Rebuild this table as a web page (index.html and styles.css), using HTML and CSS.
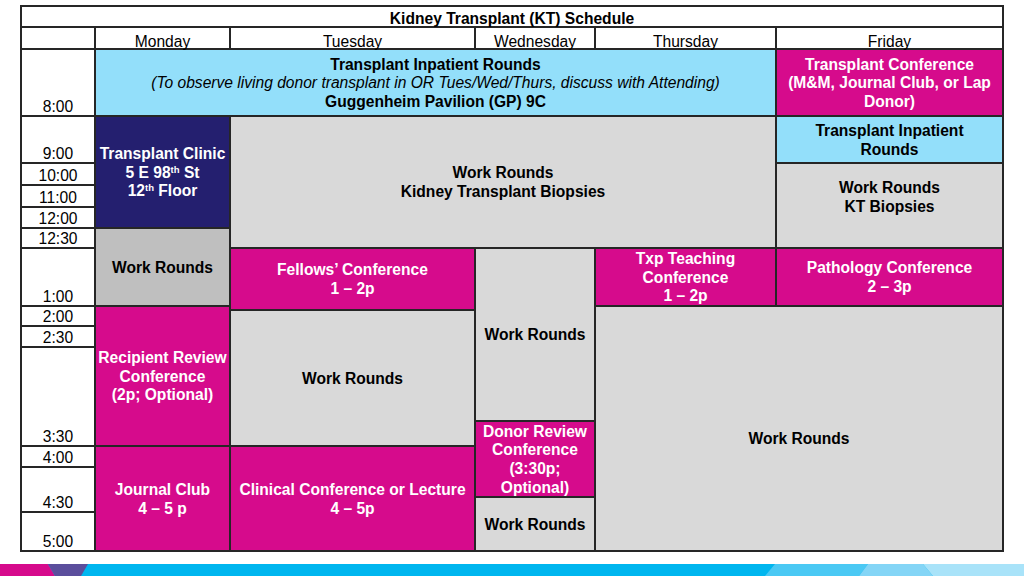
FILE: index.html
```html
<!DOCTYPE html>
<html lang="en">
<head>
<meta charset="utf-8">
<title>Kidney Transplant (KT) Schedule</title>
<link rel="stylesheet" href="styles.css">
</head>
<body>
<main class="page">
  <div class="schedule">
    <div class="cell title">Kidney Transplant (KT) Schedule</div>

    <div class="cell head h-time"></div>
    <div class="cell head h-mon">Monday</div>
    <div class="cell head h-tue">Tuesday</div>
    <div class="cell head h-wed">Wednesday</div>
    <div class="cell head h-thu">Thursday</div>
    <div class="cell head h-fri">Friday</div>

    <div class="cell time t-800">8:00</div>
    <div class="cell time t-900">9:00</div>
    <div class="cell time t-1000">10:00</div>
    <div class="cell time t-1100">11:00</div>
    <div class="cell time t-1200">12:00</div>
    <div class="cell time t-1230">12:30</div>
    <div class="cell time t-100">1:00</div>
    <div class="cell time t-200">2:00</div>
    <div class="cell time t-230">2:30</div>
    <div class="cell time t-330">3:30</div>
    <div class="cell time t-400">4:00</div>
    <div class="cell time t-430">4:30</div>
    <div class="cell time t-500">5:00</div>

    <div class="cell ev blue rounds-band">
      <p><b>Transplant Inpatient Rounds</b><br><i>(To observe living donor transplant in OR Tues/Wed/Thurs, discuss with Attending)</i><br><b>Guggenheim Pavilion (GP) 9C</b></p>
    </div>
    <div class="cell ev pink fri-conf"><p><b>Transplant Conference<br>(M&amp;M, Journal Club, or Lap<br>Donor)</b></p></div>

    <div class="cell ev navy mon-clinic"><p><b>Transplant Clinic<br>5 E 98<sup>th</sup> St<br>12<sup>th</sup> Floor</b></p></div>
    <div class="cell ev gray-dark mon-work"><p><b>Work Rounds</b></p></div>
    <div class="cell ev pink mon-recip"><p><b>Recipient Review<br>Conference<br>(2p; Optional)</b></p></div>
    <div class="cell ev pink mon-journal"><p><b>Journal Club<br>4 – 5 p</b></p></div>

    <div class="cell ev gray mid-work"><p><b>Work Rounds<br>Kidney Transplant Biopsies</b></p></div>
    <div class="cell ev pink tue-fellows"><p><b>Fellows’ Conference<br>1 – 2p</b></p></div>
    <div class="cell ev gray tue-work"><p><b>Work Rounds</b></p></div>
    <div class="cell ev pink tue-clinical"><p><b>Clinical Conference or Lecture<br>4 – 5p</b></p></div>

    <div class="cell ev gray wed-work"><p><b>Work Rounds</b></p></div>
    <div class="cell ev pink wed-donor"><p><b>Donor Review<br>Conference<br>(3:30p;<br>Optional)</b></p></div>
    <div class="cell ev gray wed-work2"><p><b>Work Rounds</b></p></div>

    <div class="cell ev pink thu-txp"><p><b>Txp Teaching<br>Conference<br>1 – 2p</b></p></div>
    <div class="cell ev gray thufri-work"><p><b>Work Rounds</b></p></div>

    <div class="cell ev blue fri-rounds"><p><b>Transplant Inpatient<br>Rounds</b></p></div>
    <div class="cell ev gray fri-work"><p><b>Work Rounds<br>KT Biopsies</b></p></div>
    <div class="cell ev pink fri-path"><p><b>Pathology Conference<br>2 – 3p</b></p></div>
  </div>

  <footer class="stripe" aria-hidden="true">
    <svg width="1024" height="12" viewBox="0 0 1024 12">
      <rect x="0" y="0" width="1024" height="12" fill="#00b6ef"/>
      <polygon points="0,0 48,0 55,12 0,12" fill="#d60b8c"/>
      <polygon points="48,0 88,0 81,12 55,12" fill="#5b4e9c"/>
      <polygon points="775,0 868,0 859,12 765,12" fill="#4bc9f4"/>
      <polygon points="868,0 923,0 933,12 859,12" fill="#84d5f6"/>
      <polygon points="923,0 1024,0 1024,12 933,12" fill="#a9e3f9"/>
    </svg>
  </footer>
</main>
</body>
</html>
```

FILE: styles.css
```css
* { box-sizing: border-box; }

html, body {
  margin: 0;
  padding: 0;
  background: #ffffff;
}

body {
  font-family: "Liberation Sans", Arial, sans-serif;
  font-size: 15.6px;
  color: #000;
  width: 1024px;
  height: 576px;
  overflow: hidden;
}

.page {
  display: flex;
  flex-direction: column;
  padding-top: 5px;
}

.schedule {
  margin-left: 20px;
  width: 984px;
  display: grid;
  grid-template-columns: 72px 133px 243px 118px 179px 225px;
  grid-template-rows: 19px 20px 65px 45px 20px 20px 19px 18px 56px 2px 14px 19px 72px 23px 19px 28px 13px 37px;
  gap: 2px;
  padding: 2px;
  background: #262626;
}

.cell {
  background: #fff;
  display: flex;
  align-items: center;
  justify-content: center;
  text-align: center;
  line-height: 18.6px;
  padding: 0 1px;
}

.cell p { margin: 0; }

.ev { padding-top: 2px; }

sup {
  font-size: 9.5px;
  line-height: 0;
  vertical-align: 5px;
}

/* title + header */
.title {
  grid-column: 1 / 7;
  grid-row: 1 / 2;
  font-weight: bold;
  align-items: flex-end;
  line-height: 14px;
}
.head {
  grid-row: 2 / 3;
  align-items: flex-end;
  line-height: 13px;
}
.h-time { grid-column: 1; }
.h-mon { grid-column: 2; }
.h-tue { grid-column: 3; }
.h-wed { grid-column: 4; }
.h-thu { grid-column: 5; }
.h-fri { grid-column: 6; }

/* time column */
.time {
  grid-column: 1;
  align-items: flex-end;
  line-height: 16px;
}
.t-800 { grid-row: 3 / 4; }
.t-900 { grid-row: 4 / 5; }
.t-1000 { grid-row: 5 / 6; }
.t-1100 { grid-row: 6 / 7; }
.t-1200 { grid-row: 7 / 8; }
.t-1230 { grid-row: 8 / 9; }
.t-100 { grid-row: 9 / 10; }
.t-200 { grid-row: 10 / 12; }
.t-230 { grid-row: 12 / 13; }
.t-330 { grid-row: 13 / 15; }
.t-400 { grid-row: 15 / 16; }
.t-430 { grid-row: 16 / 18; }
.t-500 { grid-row: 18 / 19; }

/* event colours */
.blue { background: #93dffa; color: #000; }
.pink { background: #d60b8c; color: #fff; }
.navy { background: #241f6f; color: #fff; }
.gray { background: #d9d9d9; color: #000; }
.gray-dark { background: #bfbfbf; color: #000; }

/* placements */
.rounds-band { grid-column: 2 / 6; grid-row: 3 / 4; }
.fri-conf { grid-column: 6; grid-row: 3 / 4; }

.mon-clinic { grid-column: 2; grid-row: 4 / 8; }
.mon-work { grid-column: 2; grid-row: 8 / 10; }
.mon-recip { grid-column: 2; grid-row: 10 / 15; }
.mon-journal { grid-column: 2; grid-row: 15 / 19; }

.mid-work { grid-column: 3 / 6; grid-row: 4 / 9; }
.tue-fellows { grid-column: 3; grid-row: 9 / 11; }
.tue-work { grid-column: 3; grid-row: 11 / 15; }
.tue-clinical { grid-column: 3; grid-row: 15 / 19; }

.wed-work { grid-column: 4; grid-row: 9 / 14; }
.wed-donor { grid-column: 4; grid-row: 14 / 17; }
.wed-work2 { grid-column: 4; grid-row: 17 / 19; }

.thu-txp { grid-column: 5; grid-row: 9 / 10; }
.thufri-work { grid-column: 5 / 7; grid-row: 10 / 19; padding-top: 21px; }

.fri-rounds { grid-column: 6; grid-row: 4 / 5; }
.fri-work { grid-column: 6; grid-row: 5 / 9; padding-bottom: 17px; }
.fri-path { grid-column: 6; grid-row: 9 / 10; }

/* bottom decorative stripe */
.stripe {
  margin-top: 12px;
  height: 12px;
  line-height: 0;
}
.stripe svg { display: block; }
```
